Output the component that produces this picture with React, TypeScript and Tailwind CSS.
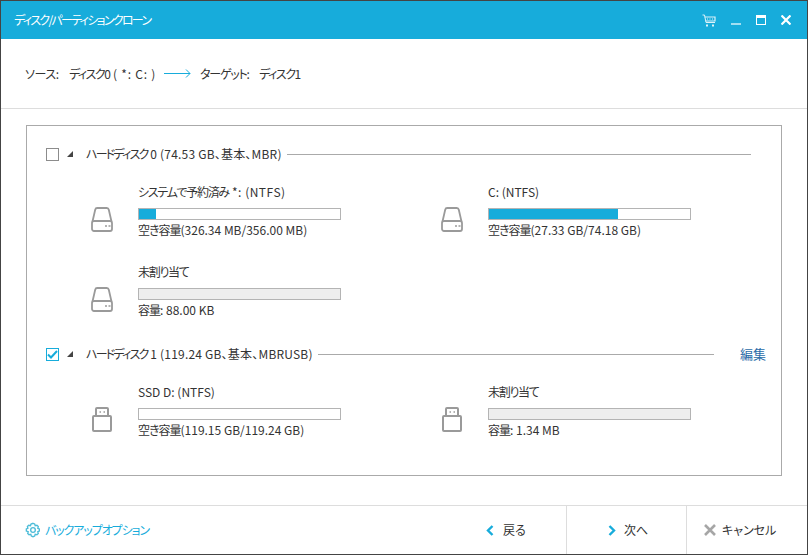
const font = { fontFamily: '"Noto Sans CJK JP", "Liberation Sans", sans-serif' };

function Hdd() {
  return (
    <svg width="22" height="25" viewBox="0 0 22 25" fill="none" stroke="#9a9a9a" strokeWidth="1.8" className="shrink-0">
      <path d="M1.5 14.5 L4.2 2.8 Q4.6 1 6.2 1 H15.8 Q17.4 1 17.8 2.8 L20.5 14.5" />
      <rect x="1" y="14" width="20" height="10" rx="2" />
      <path d="M14 19h2M17.5 19H19.5" strokeWidth="1.5" />
    </svg>
  );
}

function Usb() {
  return (
    <svg width="20" height="25" viewBox="0 0 20 25" fill="none" stroke="#9a9a9a" strokeWidth="2" className="shrink-0">
      <path d="M4 9V2Q4 1 5 1H15Q16 1 16 2V9" />
      <rect x="1" y="9" width="18" height="15" rx="1" />
      <path d="M7.5 5h1.5M11.5 5H13" strokeWidth="1.5" />
    </svg>
  );
}

function Partition({ nameJp, name, freeJp, free, used, kind, icon }: { nameJp?: string; name?: string; freeJp: string; free: string; used: number; kind: "free" | "un"; icon: "hdd" | "usb" }) {
  return (
    <div className="flex h-[56px] items-start">
      <div className={`flex h-[56px] w-[47px] shrink-0 items-start pt-[24px] ${icon === "usb" ? "pl-[1px]" : ""}`}>
        {icon === "hdd" ? <Hdd /> : <Usb />}
      </div>
      <div className="w-[203px]">
        <div className="h-[18px] text-[12px] leading-[18px] text-[#333] whitespace-nowrap">
          <span className="tracking-[-1.3px]">{nameJp}</span>
          <span className={nameJp ? "tracking-[0.5px]" : ""}>{name}</span>
        </div>
        <div className={`mt-[7px] h-[12px] border border-[#b4b4b4] ${kind === "un" ? "bg-[#eeeeee]" : "bg-white"}`}>
          {used > 0 && <div className="h-full bg-[#17acdb]" style={{ width: `${used}%` }} />}
        </div>
        <div className="mt-[1px] h-[18px] text-[12px] leading-[18px] text-[#333] whitespace-nowrap">
          <span className="tracking-[-1px]">{freeJp}</span>
          {free}
        </div>
      </div>
    </div>
  );
}

function DiskHeader({ rest, checked, edit }: { rest: string; checked?: boolean; edit?: boolean }) {
  return (
    <div className="flex h-[20px] items-center">
      <div className={`flex h-[13px] w-[13px] shrink-0 items-center justify-center border ${checked ? "border-[#17acdb]" : "border-[#8c8c8c]"}`}>
        {checked && (
          <svg width="11" height="9" viewBox="0 0 11 9" fill="none" stroke="#17acdb" strokeWidth="2">
            <path d="M1 4.5L4 7.5L10 1" />
          </svg>
        )}
      </div>
      <svg width="6" height="6" viewBox="0 0 6 6" className="ml-[8px] shrink-0">
        <path d="M6 0V6H0Z" fill="#444" />
      </svg>
      <span className="ml-[13px] text-[12px] text-[#333] whitespace-nowrap">
        <span className="tracking-[-1.8px]">ハードディスク</span>
        <span className="tracking-[0.2px]">{rest}</span>
      </span>
      <div className="ml-[5px] h-px flex-1 bg-[#aaaaaa]" />
      {edit ? (
        <span className="ml-[26px] mr-[15px] text-[13px] text-[#2b6ca8] whitespace-nowrap">編集</span>
      ) : (
        <div className="mr-[30px]" />
      )}
    </div>
  );
}

export default function App() {
  return (
    <div style={font} className="flex h-[555px] w-[808px] flex-col overflow-hidden border border-[#444] bg-white [font-feature-settings:'palt']">
      <div className="flex h-[38px] shrink-0 items-center bg-[#17acdb] pl-[13px] pr-[16px]">
        <span className="text-[12px] tracking-[-1.7px] text-white">ディスク/パーティションクローン</span>
        <div className="ml-auto flex items-center">
          <svg width="14" height="13" viewBox="0 0 14 13" fill="none" stroke="#fff" strokeWidth="1" opacity="0.85">
            <path d="M0.5 1H2.5L4 8.5H13" />
            <path d="M2.8 3H13V7H3.6" strokeWidth="1.2" />
            <path d="M5 5h1M7.5 5h1M10 5h1" />
            <path d="M5 10.5v2M11 10.5v2" strokeWidth="2" />
          </svg>
          <div className="ml-[15px] mt-[8px] h-[2px] w-[10px] bg-white/60" />
          <div className="ml-[15px] h-[10px] w-[10px] border border-white border-t-[3px]" />
          <svg width="10" height="10" viewBox="0 0 10 10" stroke="#fff" strokeWidth="2.2" className="ml-[15px]">
            <path d="M0.5 0.5L9.5 9.5M9.5 0.5L0.5 9.5" />
          </svg>
        </div>
      </div>

      <div className="flex h-[70px] shrink-0 items-center border-b border-[#dddddd] pl-[24px] text-[12px] text-[#333] whitespace-nowrap">
        <span className="w-[44px] tracking-[-0.4px]">ソース:</span>
        <span className="w-[95px]">
          <span className="tracking-[-1.5px]">ディスク0</span>
          <span className="tracking-[0.8px]"> ( *: C: )</span>
        </span>
        <svg width="27" height="9" viewBox="0 0 27 9" fill="none" stroke="#17acdb" className="shrink-0">
          <path d="M0 4.5H26M22 0.5L26 4.5L22 8.5" />
        </svg>
        <span className="ml-[9px] w-[59px] tracking-[-1.2px]">ターゲット:</span>
        <span className="tracking-[-1.4px]">ディスク1</span>
      </div>

      <div className="flex-1 px-[25px] pt-[16px]">
        <div className="h-[351px] border border-[#aaaaaa] pl-[19px] pt-[18px]">
          <DiskHeader rest=" 0 (74.53 GB、基本、MBR)" />
          <div className="ml-[45px] mt-[19px] grid grid-cols-[350px_250px] gap-y-[24px]">
            <Partition icon="hdd" nameJp="システムで予約済み" name=" *: (NTFS)" freeJp="空き容量" free="(326.34 MB/356.00 MB)" used={8.5} kind="free" />
            <Partition icon="hdd" name="C: (NTFS)" freeJp="空き容量" free="(27.33 GB/74.18 GB)" used={64} kind="free" />
            <Partition icon="hdd" nameJp="未割り当て" freeJp="容量" free=": 88.00 KB" used={0} kind="un" />
          </div>
          <div className="mt-[25px]">
            <DiskHeader checked edit rest=" 1 (119.24 GB、基本、MBRUSB)" />
          </div>
          <div className="ml-[45px] mt-[19px] grid grid-cols-[350px_250px]">
            <Partition icon="usb" name="SSD D: (NTFS)" freeJp="空き容量" free="(119.15 GB/119.24 GB)" used={0} kind="free" />
            <Partition icon="usb" nameJp="未割り当て" freeJp="容量" free=": 1.34 MB" used={0} kind="un" />
          </div>
        </div>
      </div>

      <div className="flex h-[49px] shrink-0 items-stretch border-t border-[#dddddd]">
        <div className="flex items-center pl-[24px] text-[12px] text-[#17acdb]">
          <svg width="16" height="16" viewBox="0 0 24 24" fill="none" stroke="#4cbcd8" strokeWidth="2" className="mr-[4px]">
            <path d="M12 2l2.5 1 .8 2.5 2.6-.6 2 1.9-.7 2.6 2.3 1.1v3l-2.3 1.1.7 2.6-2 1.9-2.6-.6-.8 2.5-2.5 1-2.5-1-.8-2.5-2.6.6-2-1.9.7-2.6L2 13.5v-3l2.3-1.1-.7-2.6 2-1.9 2.6.6.8-2.5z" />
            <circle cx="12" cy="12" r="3.5" />
          </svg>
          <span className="tracking-[-1.1px]">バックアップオプション</span>
        </div>
        <div className="ml-auto flex items-stretch text-[12px] text-[#333]">
          <div className="flex w-[106px] items-center pl-[26px]">
            <svg width="8" height="11" viewBox="0 0 8 11" fill="none" stroke="#17acdb" strokeWidth="2.4"><path d="M6.5 1L2 5.5L6.5 10" /></svg>
            <span className="ml-[9px]">戻る</span>
          </div>
          <div className="flex w-[120px] items-center border-l border-[#dddddd] pl-[41px]">
            <svg width="8" height="11" viewBox="0 0 8 11" fill="none" stroke="#17acdb" strokeWidth="2.4"><path d="M1.5 1L6 5.5L1.5 10" /></svg>
            <span className="ml-[8px]">次へ</span>
          </div>
          <div className="flex w-[121px] items-center border-l border-[#dddddd] pl-[17px]">
            <svg width="12" height="12" viewBox="0 0 12 12" stroke="#a6a6a6" strokeWidth="2.6"><path d="M1 1L11 11M11 1L1 11" /></svg>
            <span className="ml-[6px]">キャンセル</span>
          </div>
        </div>
      </div>
    </div>
  );
}
